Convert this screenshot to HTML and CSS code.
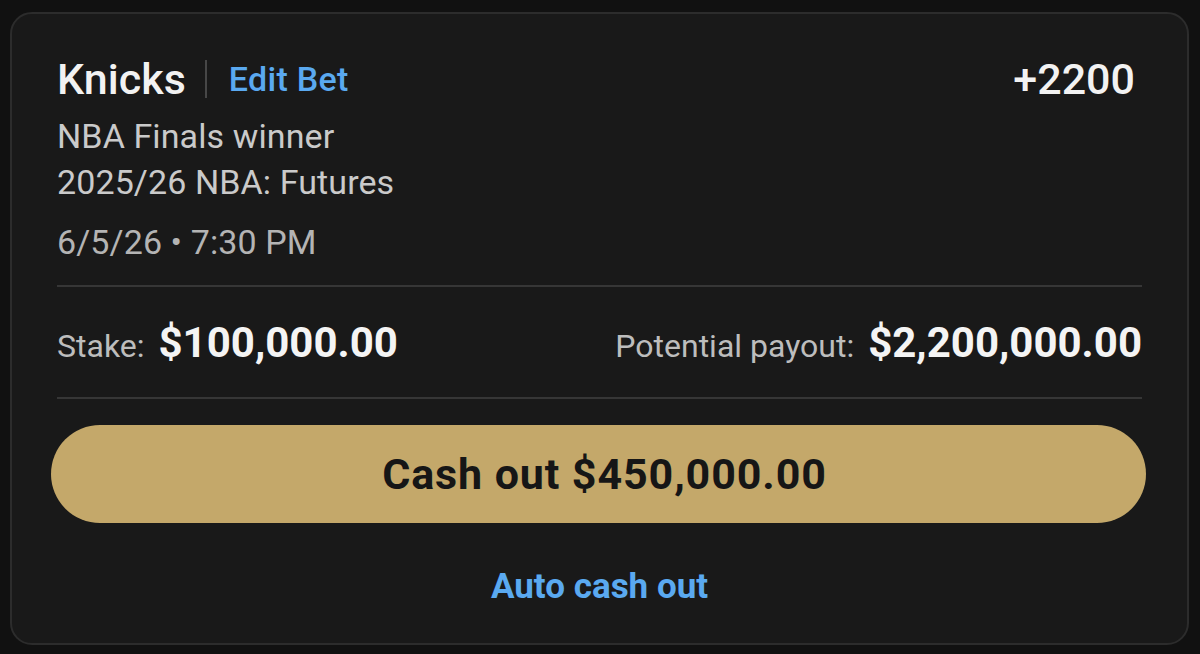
FILE: index.html
```html
<!DOCTYPE html>
<html lang="en">
<head>
    <meta charset="UTF-8">
    <meta name="viewport" content="width=device-width, initial-scale=1.0">
    <title>Bet Slip</title>

    <link rel="stylesheet" href="styles.css">

</head>
<body>
<div class="bet-card">

    <div class="bet-header">
        <div class="bet-title">
            <span class="team">Knicks</span>
            <span class="title-sep"></span>
            <a href="#" class="edit-link">Edit Bet</a>
        </div>
        <div class="odds">+2200</div>
    </div>

    <div class="bet-info">
        <div class="info-line">NBA Finals winner</div>
        <div class="info-line">2025/26 NBA: Futures</div>
        <div class="info-line info-date">6/5/26 &bull; 7:30 PM</div>
    </div>

    <div class="bet-amounts">
        <div class="amount">
            <span class="amount-label">Stake:</span>
            <span class="amount-value">$100,000.00</span>
        </div>
        <div class="amount">
            <span class="amount-label">Potential payout:</span>
            <span class="amount-value">$2,200,000.00</span>
        </div>
    </div>

    <button class="btn-cashout">Cash out $450,000.00</button>

    <div class="auto-row">
        <a href="#" class="auto-link">Auto cash out</a>
    </div>

</div>
</body>
</html>
```

FILE: styles.css
```css
body, html {
    margin: 0;
    background-color: #111111;
    font-family: Roboto, "Liberation Sans", Arial, sans-serif;
}

body {
    padding: 12px 11px 0 10px;
}

.bet-card {
    border: 2px solid #2c2c2c;
    border-radius: 22px;
    background-color: #191919;
    padding: 39px 45px 0 45px;
    height: 633px;
    box-sizing: border-box;
}

.bet-header {
    display: flex;
    justify-content: space-between;
    align-items: center;
    height: 52px;
}

.bet-title {
    display: flex;
    align-items: center;
}

.team {
    font-size: 43px;
    font-weight: 500;
    color: #f2f2f2;
    line-height: 52px;
}

.title-sep {
    width: 2px;
    height: 38px;
    background-color: #474747;
    margin: 0 22px 0 19px;
}

a {
    text-decoration: none;
}

.edit-link {
    font-size: 34px;
    font-weight: 500;
    letter-spacing: 0.3px;
    color: #5aa9f0; /* link blue */
    line-height: 52px;
}

.odds {
    font-size: 43px;
    font-weight: 500;
    color: #f2f2f2;
    line-height: 52px;
    margin-right: 7px;
}

.bet-info {
    margin-top: 8px;
    padding-bottom: 20px;
    border-bottom: 2px solid #363636;
}

.info-line {
    font-size: 34px;
    letter-spacing: 0.1px;
    line-height: 46px;
    color: #cacaca;
}

.info-date {
    margin-top: 14px;
    color: #b4b4b4;
}

.bet-amounts {
    display: flex;
    justify-content: space-between;
    align-items: baseline;
    padding: 30px 0 25px;
    border-bottom: 2px solid #363636;
}

.amount {
    display: flex;
    align-items: baseline;
    line-height: 52px;
}

.amount-label {
    font-size: 32px;
    color: #bdbdbd;
    margin-right: 14px;
}

.amount-value {
    font-size: 42px;
    font-weight: 700;
    color: #f4f4f4;
}

.btn-cashout {
    display: block;
    width: calc(100% + 10px);
    margin: 26px -5px 0 -6px;
    height: 98px;
    border: none;
    border-radius: 49px;
    background-color: #c4a86a;
    color: #161616;
    font-family: inherit;
    font-size: 43px;
    font-weight: 700;
    letter-spacing: 0.9px;
    padding: 0 0 0 12px;
    cursor: pointer;
}

.auto-row {
    text-align: center;
    margin-top: 44px;
}

.auto-link {
    font-size: 35px;
    font-weight: 700;
    color: #5aa9f0;
    line-height: 40px;
}
```
